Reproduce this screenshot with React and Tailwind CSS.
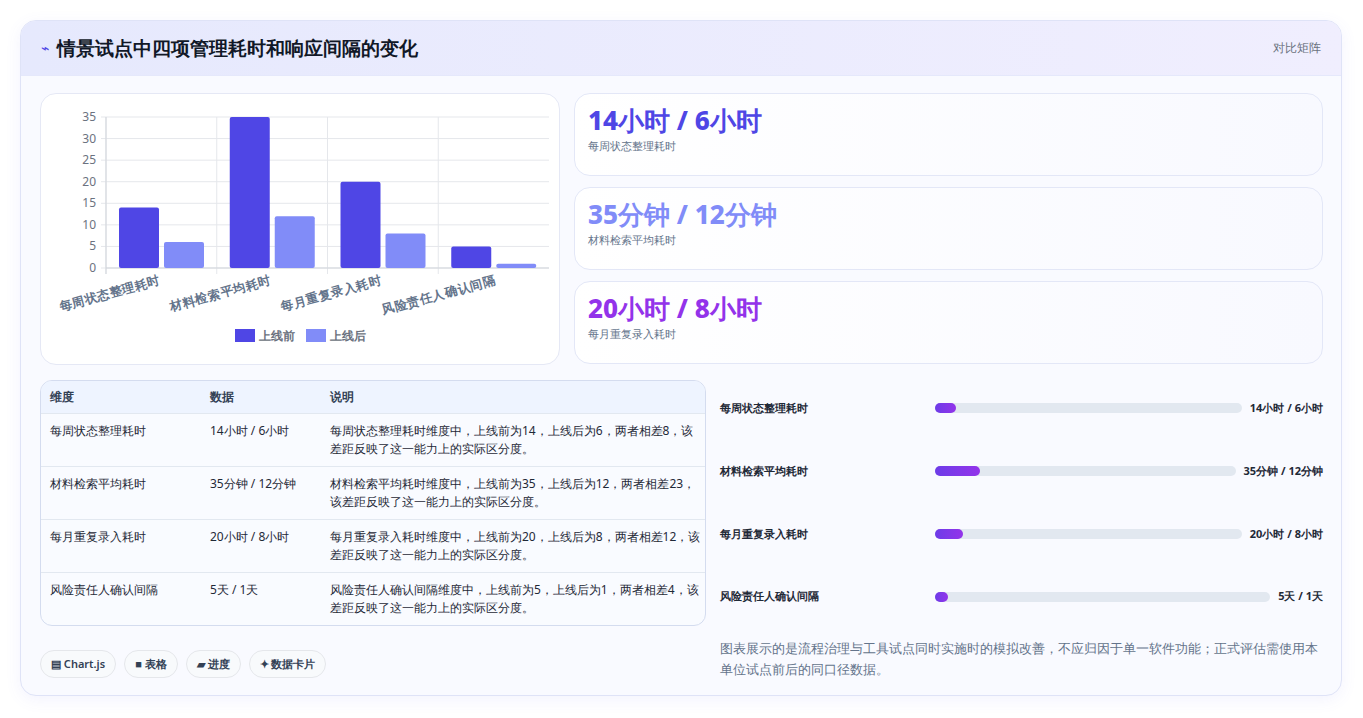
import React from 'react';

const data = [
  { name: '每周状态整理耗时', before: 14, after: 6, text: '14小时 / 6小时', pct: '7%', note: '每周状态整理耗时维度中，上线前为14，上线后为6，两者相差8，该差距反映了这一能力上的实际区分度。' },
  { name: '材料检索平均耗时', before: 35, after: 12, text: '35分钟 / 12分钟', pct: '15%', note: '材料检索平均耗时维度中，上线前为35，上线后为12，两者相差23，该差距反映了这一能力上的实际区分度。' },
  { name: '每月重复录入耗时', before: 20, after: 8, text: '20小时 / 8小时', pct: '9%', note: '每月重复录入耗时维度中，上线前为20，上线后为8，两者相差12，该差距反映了这一能力上的实际区分度。' },
  { name: '风险责任人确认间隔', before: 5, after: 1, text: '5天 / 1天', pct: '4%', note: '风险责任人确认间隔维度中，上线前为5，上线后为1，两者相差4，该差距反映了这一能力上的实际区分度。' },
];

const Chart = () => {
  const x0 = 65, top = 23, bottom = 174, right = 508, gw = 110.75;
  const k = (bottom - top) / 35;
  return (
    <svg width="520" height="271" viewBox="0 0 520 271">
      {[0, 5, 10, 15, 20, 25, 30, 35].map((v) => (
        <g key={v}>
          <line x1={x0 - 5} x2={right} y1={bottom - v * k} y2={bottom - v * k} stroke="#e5e7eb" />
          <text x={55} y={bottom - v * k + 4} textAnchor="end" fontSize="12" fill="#6b7280">{v}</text>
        </g>
      ))}
      {[0, 1, 2, 3].map((i) => (
        <line key={i} x1={x0 + i * gw} x2={x0 + i * gw} y1={top} y2={bottom + 6} stroke="#e5e7eb" />
      ))}
      <line x1={x0} x2={x0} y1={top} y2={bottom + 6} stroke="#d1d5db" />
      <line x1={x0} x2={right} y1={bottom} y2={bottom} stroke="#d1d5db" />
      {data.map((d, i) => {
        const s = x0 + i * gw;
        return (
          <g key={d.name}>
            <rect x={s + 13} y={bottom - d.before * k} width="40" height={d.before * k} rx="2" fill="#4f46e5" />
            <rect x={s + 58} y={bottom - d.after * k} width="40" height={d.after * k} rx="2" fill="#818cf8" />
            <text transform={`translate(${s + 55 + (i === 3 ? 3 : 0)},${bottom + 16}) rotate(-15)`} textAnchor="end" fontSize="12.5" fontWeight="700" fill="#64748b">{d.name}</text>
          </g>
        );
      })}
      <rect x="194" y="235" width="20" height="13" fill="#4f46e5" />
      <text x="218" y="246" fontSize="12" fill="#6b7280" fontWeight="700">上线前</text>
      <rect x="265" y="235" width="20" height="13" fill="#818cf8" />
      <text x="289" y="246" fontSize="12" fill="#6b7280" fontWeight="700">上线后</text>
    </svg>
  );
};

const stats = [
  { v: '14小时 / 6小时', l: '每周状态整理耗时', c: 'text-[#4f46e5]' },
  { v: '35分钟 / 12分钟', l: '材料检索平均耗时', c: 'text-[#818cf8]' },
  { v: '20小时 / 8小时', l: '每月重复录入耗时', c: 'text-[#9333ea]' },
];

export default function App() {
  return (
    <div className="min-h-[718px] bg-white pt-5 px-5 pb-5 font-['Noto_Sans_CJK_SC','Noto_Sans',sans-serif]">
      <div className="w-[1322px] h-[676px] rounded-2xl border border-[#dfe3f7] bg-[#f9faff] shadow-[0_4px_16px_rgba(99,102,241,0.08)] overflow-hidden flex flex-col">
        <div className="h-[55px] shrink-0 flex items-center justify-between px-5 bg-gradient-to-r from-[#e6e9fd] to-[#f0eefe] border-b border-[#e5e8fb]">
          <div className="flex items-center gap-2">
            <span className="text-[#4f46e5] text-sm">⌁</span>
            <h1 className="text-[19px] font-bold text-[#111827]">情景试点中四项管理耗时和响应间隔的变化</h1>
          </div>
          <span className="text-xs text-[#6b7280]">对比矩阵</span>
        </div>
        <div className="flex-1 pl-[19px] pr-[18px] pt-[17px] flex flex-col">
          <div className="flex gap-[14px]">
            <div className="w-[520px] h-[272px] rounded-2xl border border-[#e5e8f5] bg-white shrink-0">
              <Chart />
            </div>
            <div className="flex-1 flex flex-col gap-[11px]">
              {stats.map((s) => (
                <div key={s.l} className="h-[83px] rounded-2xl border border-[#e3e7f7] bg-gradient-to-r from-white to-[#f8f9ff] px-[13px] pt-[8px]">
                  <div className={`text-[26px] leading-[36px] font-extrabold ${s.c}`}>{s.v}</div>
                  <div className="text-[11px] text-[#64748b]">{s.l}</div>
                </div>
              ))}
            </div>
          </div>
          <div className="flex gap-[14px] mt-[15px]">
            <div className="w-[666px] shrink-0">
              <div className="rounded-xl border border-[#d4dcef] overflow-hidden bg-[#f9fbff]">
                <table className="w-full text-[12px] text-[#1f2937]">
                  <thead>
                    <tr className="bg-[#eef4ff] text-left text-[#334155]">
                      <th className="font-semibold px-[9px] h-[32px] w-[160px]">维度</th>
                      <th className="font-semibold px-[9px] w-[120px]">数据</th>
                      <th className="font-semibold px-[9px]">说明</th>
                    </tr>
                  </thead>
                  <tbody>
                    {data.map((d) => (
                      <tr key={d.name} className="border-t border-[#e2e8f0] align-top">
                        <td className="px-[9px] pt-[8px] h-[53px]">{d.name}</td>
                        <td className="px-[9px] pt-[8px]">{d.text}</td>
                        <td className="pl-[9px] pr-1 pt-[8px] pb-[6px] leading-[18px]">{d.note}</td>
                      </tr>
                    ))}
                  </tbody>
                </table>
              </div>
              <div className="flex gap-2 mt-[24px]">
                {['▤ Chart.js', '■ 表格', '▰ 进度', '✦ 数据卡片'].map((t) => (
                  <span key={t} className="h-[28px] px-[10px] rounded-full border border-[#e5e7eb] bg-[#f8fafc] text-[11px] font-semibold text-[#334155] flex items-center">{t}</span>
                ))}
              </div>
            </div>
            <div className="flex-1 flex flex-col">
              <div className="h-[245px] flex flex-col justify-between pt-[20px] pb-[20px]">
                {data.map((d) => (
                  <div key={d.name} className="flex items-center text-[11px] font-semibold text-[#1f2937]">
                    <span className="w-[215px] shrink-0">{d.name}</span>
                    <div className="flex-1 h-[10px] rounded-full bg-[#e2e8f0] mr-2">
                      <div className="h-full rounded-full bg-gradient-to-r from-[#6d3be8] to-[#9333ea]" style={{ width: d.pct }} />
                    </div>
                    <span className="font-bold whitespace-nowrap">{d.text}</span>
                  </div>
                ))}
              </div>
              <p className="mt-[13px] text-[13px] leading-[21px] text-[#64748b]">图表展示的是流程治理与工具试点同时实施时的模拟改善，不应归因于单一软件功能；正式评估需使用本单位试点前后的同口径数据。</p>
            </div>
          </div>
        </div>
      </div>
    </div>
  );
}
